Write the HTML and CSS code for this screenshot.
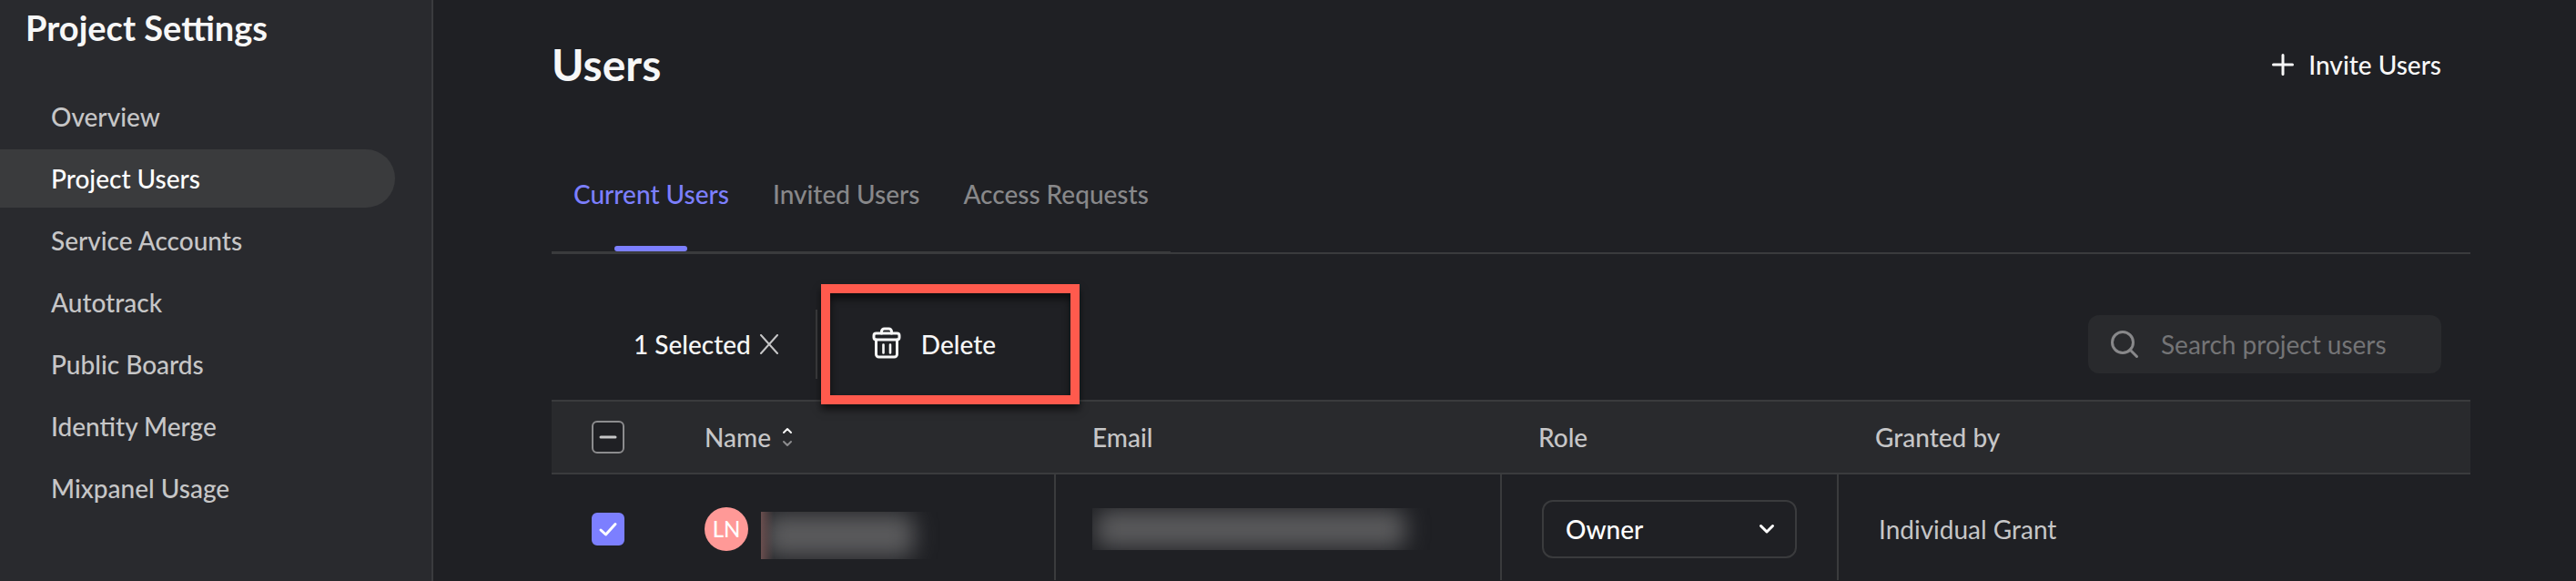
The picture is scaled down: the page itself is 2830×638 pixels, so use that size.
FILE: index.html
```html
<!DOCTYPE html>
<html lang="en">
<head>
<meta charset="utf-8">
<title>Project Settings</title>
<link rel="stylesheet" href="styles.css">
</head>
<body>
<div class="app">
  <aside class="sidebar">
    <h2 class="sidebar-title">Project Settings</h2>
    <nav class="nav">
      <a class="nav-item" href="#">Overview</a>
      <a class="nav-item nav-item-active" href="#">Project Users</a>
      <a class="nav-item" href="#">Service Accounts</a>
      <a class="nav-item" href="#">Autotrack</a>
      <a class="nav-item" href="#">Public Boards</a>
      <a class="nav-item" href="#">Identity Merge</a>
      <a class="nav-item" href="#">Mixpanel Usage</a>
    </nav>
  </aside>
  <main class="main">
    <header class="header">
      <h1 class="title">Users</h1>
      <button class="button invite" type="button">
        <svg width="24" height="24" viewBox="0 0 24 24" fill="none" stroke="currentColor" stroke-width="3" stroke-linecap="round"><path d="M12 1.5v21M1.500 12h21"/></svg>
        Invite Users
      </button>
    </header>
    <div class="tab-bar">
      <div class="tabs">
        <button class="tab tab-active" type="button">Current Users</button>
        <button class="tab" type="button">Invited Users</button>
        <button class="tab" type="button">Access Requests</button>
      </div>
    </div>
    <div class="toolbar">
      <button class="button selected" type="button">
        1 Selected
        <svg class="close" width="22" height="22" viewBox="0 0 22 22" fill="none" stroke="currentColor" stroke-width="2" stroke-linecap="round"><path d="M2 1l18 20M20 1L2 21"/></svg>
      </button>
      <div class="delete-wrap">
        <button class="button delete" type="button">
          <svg width="32" height="38" viewBox="0 0 32 38" fill="none" stroke="currentColor" stroke-width="3" stroke-linejoin="round" stroke-linecap="round"><rect x="2" y="7" width="28" height="7" rx="2.500"/><path d="M10.500 7V5a3 3 0 0 1 3-3h5a3 3 0 0 1 3 3v2M4.500 14v16a3 3 0 0 0 3 3h17a3 3 0 0 0 3-3V14"/><path stroke-width="2.600" d="M12.500 19.500v9M20 19.500v9"/></svg>
          Delete
        </button>
        <span class="highlight"></span>
      </div>
      <label class="search">
        <svg width="32" height="32" viewBox="0 0 32 32" fill="none" stroke="currentColor" stroke-width="3"><circle cx="14" cy="14" r="11.500"/><path stroke-linecap="round" d="M22 22l7.500 7.500"/></svg>
        <input class="search-input" type="text" placeholder="Search project users" aria-label="Search project users">
      </label>
    </div>
    <table class="table">
      <colgroup><col class="col-check"><col class="col-name"><col class="col-email"><col class="col-role"><col></colgroup>
      <thead>
        <tr>
          <th class="check-cell">
            <label class="check">
              <input class="box" type="checkbox" aria-label="Select all users">
              <svg class="mark mark-mixed" width="36" height="36" viewBox="0 0 36 36" fill="none" stroke="currentColor" stroke-width="3" stroke-linecap="round"><path d="M10 18h16"/></svg>
            </label>
          </th>
          <th>
            <span class="sort">Name
              <svg width="12" height="22" viewBox="0 0 12 22" fill="none" stroke-width="2" stroke-linecap="round" stroke-linejoin="round"><path stroke="#f5f5f5" d="M2 6l4-4 4 4"/><path stroke="#8c8c8e" d="M2 16l4 4 4-4"/></svg>
            </span>
          </th>
          <th>Email</th>
          <th>Role</th>
          <th>Granted by</th>
        </tr>
      </thead>
      <tbody>
        <tr>
          <td class="check-cell">
            <label class="check">
              <input class="box" type="checkbox" checked aria-label="Select user LN">
              <svg class="mark" width="36" height="36" viewBox="0 0 36 36" fill="none" stroke="currentColor" stroke-width="3" stroke-linecap="round" stroke-linejoin="round"><path d="M10 19l5.500 5L26 12.500"/></svg>
            </label>
          </td>
          <td>
            <div class="user">
              <span class="avatar">LN</span>
              <span class="redacted redacted-name"></span>
            </div>
          </td>
          <td><div class="cell"><span class="redacted redacted-email"></span></div></td>
          <td class="wide">
            <div class="select-wrap">
              <select class="select" aria-label="Role"><option>Owner</option></select>
              <svg class="chevron" width="18" height="12" viewBox="0 0 18 12" fill="none" stroke="currentColor" stroke-width="3" stroke-linecap="round" stroke-linejoin="round"><path d="M2.500 2.500L9 9l6.500-6.500"/></svg>
            </div>
          </td>
          <td class="wide"><div class="cell">Individual Grant</div></td>
        </tr>
      </tbody>
    </table>
  </main>
</div>
</body>
</html>
```
FILE: styles.css
```css
* { box-sizing: border-box; }

body {
  margin: 0;
  background: #1f2024;
  color: #c6c6c7;
  font: 500 28px/36px Lato, "Open Sans", sans-serif;
}

button, input, select {
  margin: 0;
  border: 0;
  background: none;
  color: inherit;
  font: inherit;
}

svg { flex: none; }

.app { display: flex; min-height: 100vh; }

.sidebar {
  flex: none;
  width: 476px;
  border-right: 2px solid #3a3b3e;
  background: #292a2e;
}

.sidebar-title {
  margin: 0 0 44px;
  padding: 8px 28px 0;
  color: #f7f7f7;
  font-size: 38px;
  font-weight: 700;
  line-height: 44px;
}

.nav {
  display: flex;
  flex-direction: column;
  gap: 4px;
  padding-right: 40px;
}

.nav-item {
  padding: 14px 56px;
  border-radius: 0 32px 32px 0;
  color: #c6c6c7;
  text-decoration: none;
}

.nav-item-active { background: #3a3b3d; color: #fff; }

.main { flex: 1; min-width: 0; padding: 0 116px 0 130px; }

.header {
  display: flex;
  align-items: center;
  justify-content: space-between;
  height: 142px;
  padding-right: 32px;
}

.title {
  margin: 0;
  color: #f7f7f7;
  font-size: 48px;
  font-weight: 700;
  line-height: 60px;
}

.button {
  display: flex;
  align-items: center;
  padding: 0;
  color: #f7f7f7;
}

.invite { gap: 16px; }

.tab-bar { display: flex; border-bottom: 2px solid #3a3b3d; }

.tabs { display: flex; border-bottom: 1px solid #3a3b3d; }

.tab {
  display: flex;
  flex-direction: column;
  align-items: center;
  padding: 53px 24px 0;
  height: 134px;
  color: #88888a;
}

.tab-active { color: #7c7fff; }

.tab-active::after {
  content: "";
  width: 80px;
  height: 6px;
  margin-top: 39px;
  border-radius: 3px;
  background: #7c7fff;
}

.toolbar {
  display: flex;
  align-items: center;
  padding: 61px 32px 23px 90px;
}

.selected { gap: 9px; padding-right: 40px; }

.close { color: #c6c6c7; }

.delete-wrap {
  position: relative;
  display: flex;
  border-left: 2px solid #3a3b3d;
}

.delete { gap: 22px; height: 76px; padding: 0 92px 0 60px; }

.highlight {
  position: absolute;
  inset: -28px 0 -28px 4px;
  border: 10px solid #ff5a4d;
  box-shadow: 0 6px 8px #0009, inset 0 6px 8px #0009;
  pointer-events: none;
}

.search {
  display: flex;
  align-items: center;
  gap: 24px;
  width: 388px;
  height: 64px;
  margin-left: auto;
  padding: 0 24px;
  border-radius: 12px;
  background: #292a2d;
  color: #88888a;
}

.search-input {
  flex: 1;
  min-width: 0;
  padding: 0;
  font-weight: 400;
  outline: 0;
}

.search-input::placeholder { color: #747476; opacity: 1; }

.table {
  width: 100%;
  border-collapse: separate;
  border-spacing: 0;
  table-layout: fixed;
}

.col-check { width: 128px; }
.col-name { width: 426px; }
.col-email { width: 490px; }
.col-role { width: 370px; }

th {
  height: 82px;
  padding: 0 40px;
  border-top: 2px solid #3a3b3d;
  border-bottom: 2px solid #3a3b3d;
  background: #292a2d;
  font-weight: 500;
  text-align: left;
}

td {
  padding: 28px 40px 24px;
  font-weight: 400;
  vertical-align: top;
}

td + td:not(:last-child) { border-right: 2px solid #3a3b3d; }

th.check-cell, td.check-cell { padding-left: 44px; }

td.wide { padding-left: 44px; padding-right: 44px; }

td .check { margin: 14px 0; }

.check { display: grid; width: 36px; height: 36px; }

.box, .mark { grid-area: 1 / 1; }

.box {
  width: 36px;
  height: 36px;
  border: 2px solid #8c8c8e;
  border-radius: 6px;
  background: #1f2024;
  appearance: none;
}

.box:checked { border-color: #7c7fff; background: #7c7fff; }

.mark { color: #fff; pointer-events: none; }
.mark-mixed { color: #c6c6c7; }

.sort { display: flex; align-items: center; gap: 12px; }

.user { display: flex; align-items: center; gap: 14px; height: 64px; }

.avatar {
  width: 48px;
  border-radius: 24px;
  background: #ff9997;
  color: #fff;
  font-size: 24px;
  font-weight: 500;
  line-height: 48px;
  text-align: center;
}

.cell { display: flex; align-items: center; height: 64px; }

.redacted { position: relative; overflow: hidden; }

.redacted::before {
  content: "";
  position: absolute;
  inset: 2px 32px 2px 4px;
  border-radius: 12px;
  background: #5a5a5c;
  filter: blur(12px);
}

.redacted-name {
  width: 200px;
  height: 52px;
  margin-top: 14px;
}

.redacted-name::after {
  content: "";
  position: absolute;
  inset: 0 auto 0 0;
  width: 14px;
  background: linear-gradient(90deg, #6a4e4e, #6a4e4e00);
}

.redacted-email { width: 376px; height: 46px; }

.select-wrap { display: grid; align-items: center; }

.select, .chevron { grid-area: 1 / 1; }

.select {
  height: 64px;
  padding: 0 60px 0 24px;
  border: 2px solid #3a3b3d;
  border-radius: 12px;
  color: #fff;
  font-weight: 500;
  appearance: none;
}

.chevron {
  justify-self: end;
  margin-right: 24px;
  color: #fff;
  pointer-events: none;
}
```
